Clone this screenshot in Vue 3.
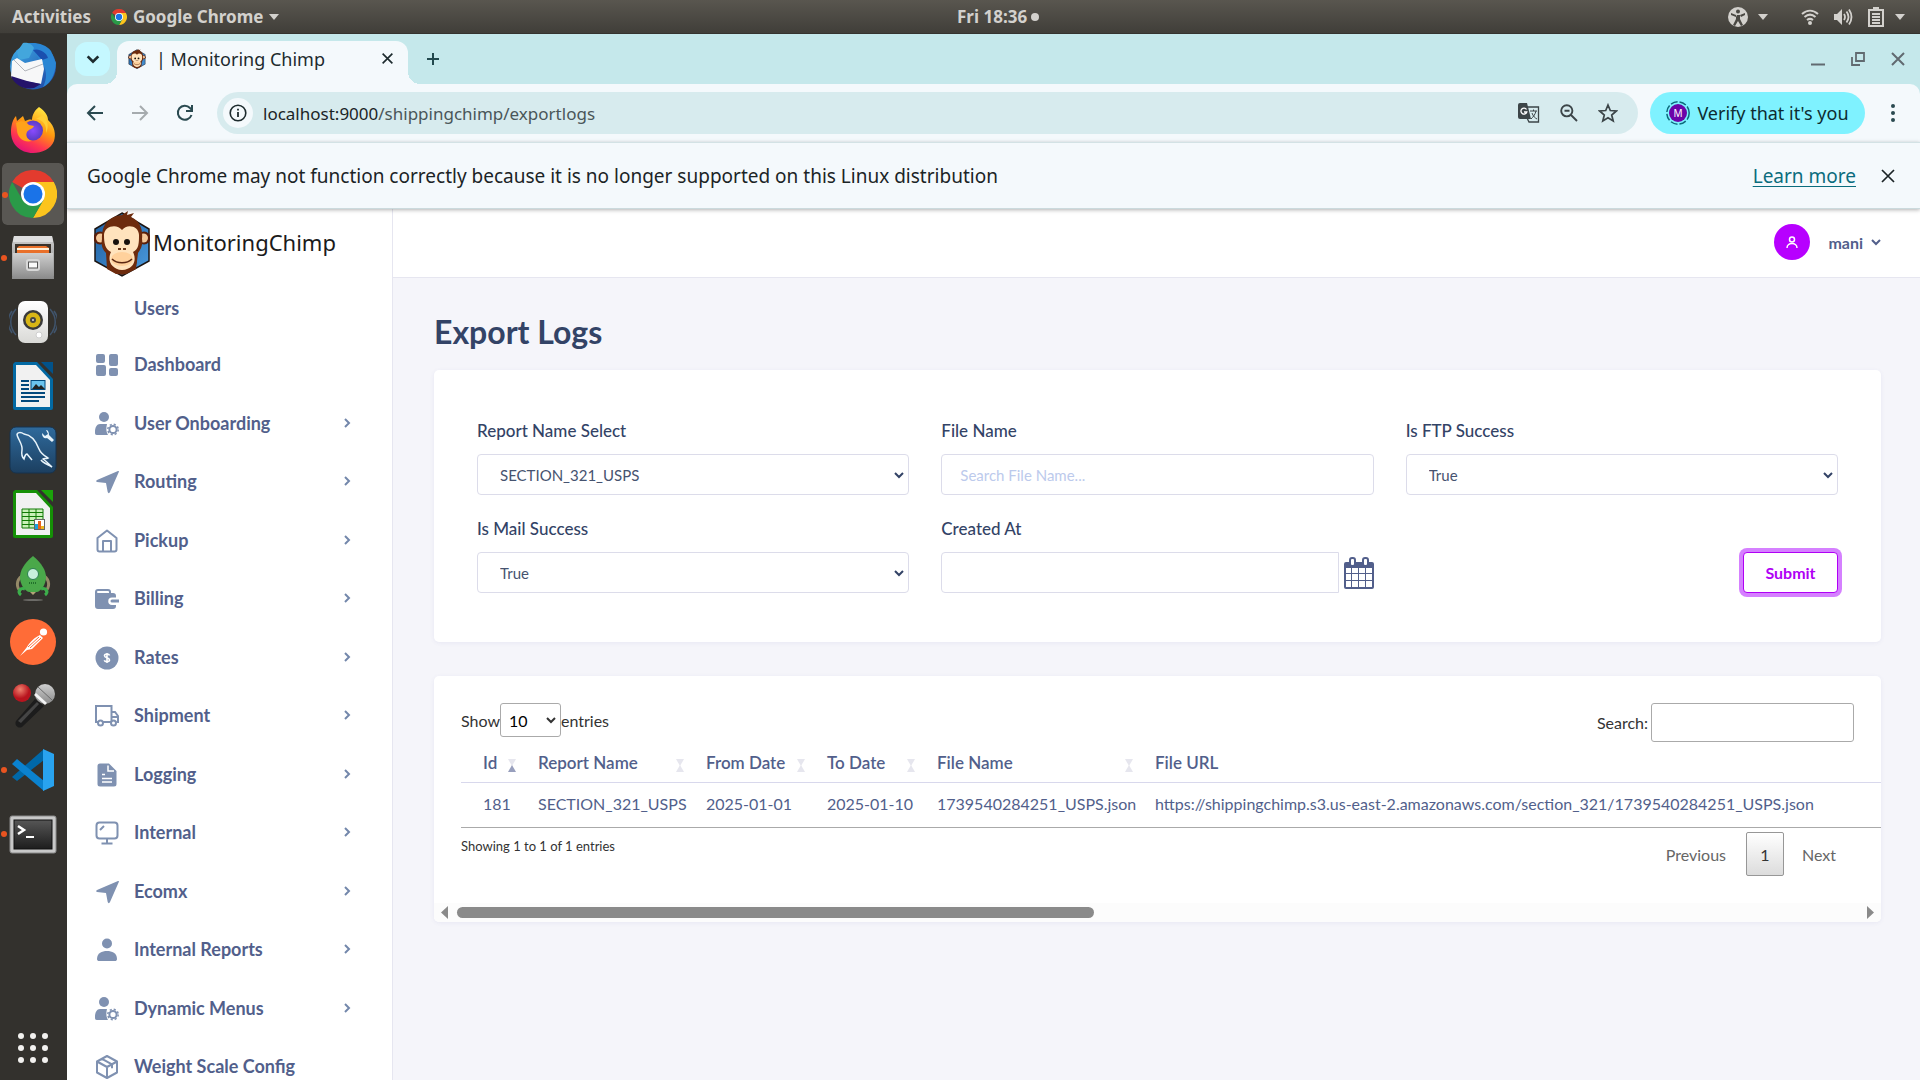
<script setup>
import { ref } from 'vue'

const dock = [
  { id: 'mail', label: 'Thunderbird' },
  { id: 'firefox', label: 'Firefox' },
  { id: 'chrome', label: 'Chrome', running: true, active: true },
  { id: 'files', label: 'Files', running: true },
  { id: 'speaker', label: 'Rhythmbox' },
  { id: 'writer', label: 'Writer' },
  { id: 'dolphin', label: 'Workbench' },
  { id: 'calc', label: 'Calc' },
  { id: 'rocket', label: 'Robo 3T' },
  { id: 'postman', label: 'Postman' },
  { id: 'mic', label: 'Recorder' },
  { id: 'vscode', label: 'Code', running: true },
  { id: 'terminal', label: 'Terminal', running: true }
]

const menu = [
  { text: 'Dashboard', icon: 'grid' },
  { text: 'User Onboarding', icon: 'usergear', more: true },
  { text: 'Routing', icon: 'plane', more: true },
  { text: 'Pickup', icon: 'home', more: true },
  { text: 'Billing', icon: 'wallet', more: true },
  { text: 'Rates', icon: 'dollar', more: true },
  { text: 'Shipment', icon: 'truck', more: true },
  { text: 'Logging', icon: 'doc', more: true },
  { text: 'Internal', icon: 'monitor', more: true },
  { text: 'Ecomx', icon: 'plane', more: true },
  { text: 'Internal Reports', icon: 'person', more: true },
  { text: 'Dynamic Menus', icon: 'usergear', more: true },
  { text: 'Weight Scale Config', icon: 'box' }
]

const columns = ['Id', 'Report Name', 'From Date', 'To Date', 'File Name', 'File URL']
const rows = [
  ['181', 'SECTION_321_USPS', '2025-01-01', '2025-01-10', '1739540284251_USPS.json',
    'https://shippingchimp.s3.us-east-2.amazonaws.com/section_321/1739540284251_USPS.json']
]

const report = ref('SECTION_321_USPS')
const fileName = ref('')
const ftp = ref('True')
const mail = ref('True')
const createdAt = ref('')
const pageSize = ref('10')
const search = ref('')
</script>

<template>
  <div class="desktop">
    <svg class="sprite" width="0" height="0" aria-hidden="true">
      <defs>
        <linearGradient id="gBlue" x1="0" y1="0" x2="1" y2="1"><stop offset="0" stop-color="#3fb0ea" /><stop offset="1" stop-color="#1c3fa0" /></linearGradient>
        <linearGradient id="gFox" x1="0.8" y1="0" x2="0.3" y2="1"><stop offset="0" stop-color="#fff24a" /><stop offset="0.45" stop-color="#ff980e" /><stop offset="0.75" stop-color="#ff3750" /><stop offset="1" stop-color="#e3107a" /></linearGradient>
        <linearGradient id="gGray" x1="0" y1="0" x2="0" y2="1"><stop offset="0" stop-color="#cfcfcf" /><stop offset="1" stop-color="#8a8a8a" /></linearGradient>
        <linearGradient id="gWhite" x1="0" y1="0" x2="0" y2="1"><stop offset="0" stop-color="#ffffff" /><stop offset="1" stop-color="#d9d9d6" /></linearGradient>
        <linearGradient id="gNavy" x1="0" y1="0" x2="0" y2="1"><stop offset="0" stop-color="#2f6a9c" /><stop offset="1" stop-color="#1c3f60" /></linearGradient>
        <linearGradient id="gTerm" x1="0" y1="0" x2="0" y2="1"><stop offset="0" stop-color="#565656" /><stop offset="1" stop-color="#1d1d1d" /></linearGradient>
        <linearGradient id="gHex" x1="0" y1="0" x2="1" y2="1"><stop offset="0" stop-color="#1d5d9f" /><stop offset="1" stop-color="#4b9add" /></linearGradient>
        <radialGradient id="gPurple"><stop offset="0" stop-color="#8a4bff" /><stop offset="1" stop-color="#5a3cc4" /></radialGradient>
        <radialGradient id="gRed" cx="0.4" cy="0.3"><stop offset="0" stop-color="#f0826e" /><stop offset="1" stop-color="#b8141e" /></radialGradient>
      </defs>

      <symbol id="mail" viewBox="0 0 48 48">
        <circle cx="24" cy="24.500" r="23" fill="url(#gBlue)" />
        <path d="M14 3C22-1 36 1 42 9l5 12c-1 12-5 20-13 24 4-8 4-16 0-22L24 8z" fill="#2a86d4" />
        <path d="M24 8c6-2 13 2 15 8l-6 2z" fill="#1b4fae" />
        <path d="M8 10l6-9c3-1 9 0 11 5l-5 10-10 2z" fill="#43a6dc" />
        <path d="M3 19l5-3 8 5 17-4 2 10-3 15-17-3L2 35z" fill="#f7f7f8" />
        <path d="M5 18l11 11 18-7" fill="none" stroke="#b3b5bb" stroke-width="1" />
        <path d="M2 34l16 5 14 3-7 4C16 48 6 44 2 34z" fill="#25136b" />
      </symbol>
      <symbol id="firefox" viewBox="0 0 48 48">
        <path d="M30 1c7 5 9 9 9 13 7 6 8 15 6 21C42 43 33 47 24 47 11 47 2 38 2 26c0-7 2-13 5-16l1 5 6-5 2 5c3-1 5-2 7-1 0-5 3-10 7-13z" fill="url(#gFox)" />
        <circle cx="24" cy="24.500" r="10" fill="url(#gPurple)" />
        <path d="M7 17c5-3 10-2 13 2l5 1c-1 3-5 3-7 6-2 4 1 8 5 9-9 2-15-4-15-11z" fill="#ffa21a" />
        <path d="M27 13c8 1 11 7 10 14 3-6 2-13-3-18z" fill="#ffcf36" />
      </symbol>
      <symbol id="chrome" viewBox="0 0 48 48">
        <path d="M24 24L3.200 12A24 24 0 0 1 44.800 12H24z" fill="#e33b2e" />
        <path d="M24 12h20.800A24 24 0 0 1 24 48l10.400-18z" fill="#fcc41d" />
        <path d="M3.200 12A24 24 0 0 0 24 48l10.400-18L24 34 13.600 30z" fill="#2a9a48" />
        <circle cx="24" cy="24" r="12" fill="#fff" />
        <circle cx="24" cy="24" r="9.500" fill="#1a73e8" />
      </symbol>
      <symbol id="files" viewBox="0 0 48 48">
        <path d="M5 2h38l2 8v32H3V10z" fill="url(#gGray)" />
        <path d="M5 2h38l1 6H4z" fill="#dedede" />
        <rect x="6" y="10" width="36" height="12" fill="#3a332c" />
        <path d="M8 14l2-2h27l3 2v8H8z" fill="#e9702a" />
        <rect x="8" y="14" width="32" height="2" fill="#fff0d8" />
        <path d="M4 19h40l1 26H3z" fill="url(#gGray)" />
        <rect x="17" y="25" width="14" height="12" rx="3" fill="#d8d8d8" />
        <rect x="19.500" y="28" width="9" height="6" fill="#fafafa" stroke="#555" />
      </symbol>
      <symbol id="speaker" viewBox="0 0 48 48">
        <path d="M7 11c-7 8-7 18 0 26M3 13c-5 7-5 15 0 22M41 11c7 8 7 18 0 26M45 13c5 7 5 15 0 22" fill="none" stroke="#40546c" stroke-width="1.500" />
        <rect x="9" y="3" width="30" height="42" rx="7" fill="url(#gWhite)" />
        <circle cx="24" cy="22" r="10" fill="#3a3a3a" />
        <circle cx="24" cy="22" r="7.500" fill="#d8b616" />
        <circle cx="24" cy="22" r="3" fill="#454545" />
        <circle cx="24" cy="22" r="1" fill="#ddd" />
        <circle cx="30" cy="37" r="3" fill="#fff" stroke="#cfcfcf" />
      </symbol>
      <symbol id="writer" viewBox="0 0 48 48">
        <path d="M6 0h22l16 17v29a2 2 0 0 1-2 2H6a2 2 0 0 1-2-2V2z" fill="#0369a3" />
        <path d="M32 0h12v12z" fill="#02528a" />
        <path d="M7 3h20l14 15v27H7z" fill="#f1f1f1" />
        <path d="M12 19h8M12 23h8M12 27h8M12 31h24M12 35h24M12 39h18" stroke="#03497c" stroke-width="2" />
        <rect x="22" y="18.500" width="14" height="9" fill="#6bc3ee" stroke="#03497c" />
        <path d="M23 27l4-5 3 3 2-2 4 4z" fill="#222" />
      </symbol>
      <symbol id="calc" viewBox="0 0 48 48">
        <path d="M6 0h22l16 17v29a2 2 0 0 1-2 2H6a2 2 0 0 1-2-2V2z" fill="#159006" />
        <path d="M32 0h12v12z" fill="#1ba30a" />
        <path d="M7 3h20l14 15v27H7z" fill="#f1f1f1" />
        <path d="M13 19h21v19H13z" fill="#c9f0b8" stroke="#107a04" />
        <path d="M13 22.500h21M13 26.500h21M13 30.500h21M13 34.500h21M20 19v19M27 19v19" stroke="#107a04" />
        <rect x="25.500" y="29.500" width="10" height="10" fill="#fff" stroke="#666" />
        <path d="M26 34h3v5h-3z" fill="#19a1de" /><path d="M29 31h3v8h-3z" fill="#e7641c" /><path d="M32 36h3v3h-3z" fill="#ecb71f" />
      </symbol>
      <symbol id="dolphin" viewBox="0 0 48 48">
        <rect x="1" y="1" width="46" height="46" rx="6" fill="url(#gNavy)" stroke="#17334e" />
        <path d="M8 9c0-3 4-3 7-1 8 1 12 7 15 15 2 5 6 7 9 9-2 1-4 0-5 1 3 2 6 5 9 8-5-3-9-4-11-7M8 9c2 6 6 10 5 15-1 6 1 8 2 9 1-3 1-5 3-5l5 6" fill="none" stroke="#e8f4fb" stroke-width="1.500" />
        <path d="M37 4l2 4-3 2-3-3c0 4 2 6 5 5l5 4 2-2-5-5c0-3-1-5-3-5z" fill="#e8f4fb" />
      </symbol>
      <symbol id="rocket" viewBox="0 0 48 48">
        <path d="M13 22c-6 4-6 12-1 15M35 22c6 4 6 12 1 15" fill="none" stroke="#958a68" stroke-width="3" />
        <path d="M24 2c9 7 13 15 13 21 0 8-5 14-9 15h-8c-4-1-9-7-9-15C11 17 15 9 24 2z" fill="#4aa84a" />
        <circle cx="24" cy="20" r="5.500" fill="#c8f0dc" stroke="#2c8051" stroke-width="1" />
        <path d="M20 29h8" stroke="#21702b" stroke-width="2" stroke-dasharray="1 1" />
        <path d="M16 35c-5-2-8 3-4 6M32 35c5-2 8 3 4 6" fill="none" stroke="#3cae4b" stroke-width="3" />
        <path d="M21 38h6l-3 3z" fill="#b3a678" />
        <ellipse cx="24" cy="46" rx="10" ry="1" fill="#6d6c68" />
      </symbol>
      <symbol id="postman" viewBox="0 0 48 48">
        <circle cx="24" cy="24" r="23" fill="#ff6c37" />
        <circle cx="34.500" cy="14" r="3.600" fill="#fff" />
        <path d="M31 17l3 3-11 11-5 1-7 6 7-9c2-4 8-10 13-12z" fill="#fff" />
        <path d="M19 29l11-10M21 30l11-10" stroke="#ff6c37" stroke-width="1" />
      </symbol>
      <symbol id="mic" viewBox="0 0 48 48">
        <path d="M26 17l9 7-22 21c-4 2-8-2-6-6z" fill="#1c1c1c" />
        <path d="M28 20l2 2-18 19-3-2z" fill="#454545" />
        <circle cx="36" cy="12" r="10" fill="url(#gGray)" />
        <path d="M26 12l11 10" stroke="#f3f3f3" stroke-width="3" />
        <path d="M29 5l14 13" stroke="#6b6b6b" stroke-width="1" />
        <circle cx="13" cy="11" r="9" fill="url(#gRed)" />
      </symbol>
      <symbol id="vscode" viewBox="0 0 48 48">
        <path d="M3 31l5 4 27-21V3z" fill="#0068a8" />
        <path d="M8 13l27 22v10L3 18z" fill="#0b82cf" />
        <path d="M34 3l11 5v32l-11 5z" fill="#29a3ef" />
      </symbol>
      <symbol id="terminal" viewBox="0 0 48 48">
        <rect x="1" y="6" width="46" height="37" rx="2" fill="#c8c8c8" stroke="#8b8b8b" />
        <rect x="5" y="10" width="38" height="29" fill="url(#gTerm)" stroke="#111" />
        <path d="M9 16l6 4-6 4" fill="none" stroke="#fff" stroke-width="2.500" />
        <path d="M17 27h8" stroke="#fff" stroke-width="2" />
      </symbol>
      <symbol id="monkey" viewBox="0 0 56 66">
        <path d="M28 2l27 16v32L28 65 1 50V18z" fill="url(#gHex)" stroke="#1c1512" stroke-width="1.500" />
        <path d="M13 50c1 7 8 12 15 14 7-2 14-7 15-14z" fill="#5f260d" />
        <circle cx="6" cy="27" r="6.500" fill="#5a1f0b" /><circle cx="50" cy="27" r="6.500" fill="#5a1f0b" />
        <circle cx="6.500" cy="27" r="4.500" fill="#f5c99a" /><circle cx="49.500" cy="27" r="4.500" fill="#f5c99a" />
        <path d="M28 4l6-4-1 4 7-2-3 4c9 4 12 12 11 22 1 6-1 10-4 14l-2 16-10 5H22l-9-5-1-16c-4-4-5-8-4-14C7 14 15 5 28 4z" fill="#6d2b0d" />
        <path d="M28 19c5-7 17-4 17 5 0 8 0 14-6 17 4 8 1 17-11 18-11-1-15-10-11-18-6-3-7-9-7-17 0-9 13-12 18-5z" fill="#ffe3bd" />
        <ellipse cx="28" cy="48" rx="11" ry="7" fill="#ffd19c" />
        <circle cx="22" cy="31" r="3" fill="#17110d" /><circle cx="33" cy="31" r="3" fill="#17110d" />
        <path d="M24 38h3M29 38h3" stroke="#6d3a1c" stroke-width="2" />
        <path d="M18 48c5 5 15 5 20 0" fill="none" stroke="#5a2711" stroke-width="1.500" />
      </symbol>

      <symbol id="grid" viewBox="0 0 24 24"><path d="M3 1h5a2 2 0 0 1 2 2v5a2 2 0 0 1-2 2H3a2 2 0 0 1-2-2V3a2 2 0 0 1 2-2zm13 0h5a2 2 0 0 1 2 2v8a2 2 0 0 1-2 2h-5a2 2 0 0 1-2-2V3a2 2 0 0 1 2-2zM3 12h6a2 2 0 0 1 2 2v7a2 2 0 0 1-2 2H3a2 2 0 0 1-2-2v-7a2 2 0 0 1 2-2zm13 3h5a2 2 0 0 1 2 2v4a2 2 0 0 1-2 2h-5a2 2 0 0 1-2-2v-4a2 2 0 0 1 2-2z" fill="currentColor" /></symbol>
      <symbol id="usergear" viewBox="0 0 24 24"><circle cx="9" cy="5" r="5" fill="currentColor" /><path d="M5 12h7c-1 4-1 8 1 11H2c-2 0-2-1-2-3 0-5 2-8 5-8z" fill="currentColor" /><circle cx="18" cy="17.500" r="3.600" fill="none" stroke="currentColor" stroke-width="2" /><circle cx="18" cy="17.500" r="5.200" fill="none" stroke="currentColor" stroke-width="1.500" stroke-dasharray="2.100 2" /></symbol>
      <symbol id="plane" viewBox="0 0 24 24"><path d="M23 1c1-.3 1 .3.800 1L15 22c-.5 1.500-2 1.500-2.300 0L11 13 2 12c-1-.3-1-1.500 0-2z" fill="currentColor" /></symbol>
      <symbol id="home" viewBox="0 0 24 24"><path d="M2.500 9L12 1.500 21.500 9v11.500a2 2 0 0 1-2 2h-15a2 2 0 0 1-2-2zM8 22V12h8v10" fill="none" stroke="currentColor" stroke-width="2" stroke-linejoin="round" /></symbol>
      <symbol id="wallet" viewBox="0 0 24 24"><path d="M3 2h10a3 3 0 0 1 3 3v1h2a3 3 0 0 1 3 3v1.500h-4a3.700 3.700 0 0 0 0 7.500h4v1a3 3 0 0 1-3 3H3a3 3 0 0 1-3-3V5a3 3 0 0 1 3-3zm0 2a1 1 0 0 0 0 2h11V5a1 1 0 0 0-1-1z" fill="currentColor" fill-rule="evenodd" /><path d="M17 12.500h7v3h-7a1.500 1.500 0 0 1 0-3z" fill="currentColor" /></symbol>
      <symbol id="dollar" viewBox="0 0 24 24"><circle cx="12" cy="12" r="11.500" fill="currentColor" /><path d="M14.500 9.500c-.5-2-5-2-5 .3 0 2.400 5 1.700 5 4.300 0 2.200-4.700 2.200-5.200.2M12 7v10" fill="none" stroke="#fff" stroke-width="1.600" /></symbol>
      <symbol id="truck" viewBox="0 0 24 24"><path d="M3 18H1V2h15.500v16H8M16.500 8H20l3 4v6h-1.500M16.500 13H23" fill="none" stroke="currentColor" stroke-width="2" /><circle cx="5.500" cy="19" r="2.500" fill="#fff" stroke="currentColor" stroke-width="2" /><circle cx="18.500" cy="19" r="2.500" fill="#fff" stroke="currentColor" stroke-width="2" /></symbol>
      <symbol id="doc" viewBox="0 0 24 24"><path d="M5 .5h9L21.500 8v13a2.500 2.500 0 0 1-2.500 2.500H5A2.500 2.500 0 0 1 2.500 21V3A2.500 2.500 0 0 1 5 .5z" fill="currentColor" /><path d="M13 2.500V8h6M7 11.500h3M7 15.500h10M7 19h10" fill="none" stroke="#fff" stroke-width="1.500" /></symbol>
      <symbol id="monitor" viewBox="0 0 24 24"><rect x="1.500" y="1.500" width="21" height="16" rx="3" fill="none" stroke="currentColor" stroke-width="2" /><path d="M12 18v4M6.500 22.500h11M5 9l4-4" stroke="currentColor" stroke-width="2" /></symbol>
      <symbol id="person" viewBox="0 0 24 24"><circle cx="12" cy="5.500" r="5" fill="currentColor" /><path d="M2 21c0-6 5-8 10-8s10 2 10 8c0 1.500-1 2-2 2H4c-1 0-2-.5-2-2z" fill="currentColor" /></symbol>
      <symbol id="box" viewBox="0 0 24 24"><path d="M12 1l10 5.500v11L12 23 2 17.500v-11zM2 6.500L12 12l10-5.500M12 12v11M7 3.800l10 5.500v4" fill="none" stroke="currentColor" stroke-width="2" stroke-linejoin="round" /></symbol>
      <symbol id="cross" viewBox="0 0 16 16"><path d="M2 2l12 12M14 2L2 14" stroke="currentColor" stroke-width="2" /></symbol>
      <symbol id="down" viewBox="0 0 12 12"><path d="M2 4l4 4 4-4" fill="none" stroke="currentColor" stroke-width="2" /></symbol>
      <symbol id="caret" viewBox="0 0 10 6"><path d="M0 0h10L5 6z" fill="currentColor" /></symbol>
    </svg>

    <header class="topbar">
      <div class="tb-left">
        <span>Activities</span>
        <span class="tb-app"><svg width="16" height="16"><use href="#chrome" /></svg>Google Chrome<svg width="10" height="6"><use href="#caret" /></svg></span>
      </div>
      <div class="clock">Fri 18:36<i class="dot"></i></div>
      <div class="tray">
        <svg width="20" height="20" viewBox="0 0 20 20"><circle cx="10" cy="10" r="10" fill="currentColor" /><circle cx="10" cy="4.500" r="2" fill="#4a4843" /><path d="M3 6l5 2v4l-3 6 2 1 3-5 3 5 2-1-3-6V8l5-2v2l-4 2-1-2H9L8 10 3 8z" fill="#4a4843" /></svg>
        <svg class="c1" width="10" height="6"><use href="#caret" /></svg>
        <svg width="18" height="18" viewBox="0 0 18 18"><path d="M1 6c5-4.500 11-4.500 16 0M3.500 9c3.500-3 7.500-3 11 0M6 12c2-1.500 4-1.500 6 0" fill="none" stroke="currentColor" stroke-width="2" /><circle cx="9" cy="15" r="2" fill="currentColor" /></svg>
        <svg width="19" height="18" viewBox="0 0 19 18"><path d="M0 6h3l5-5v16l-5-5H0z" fill="currentColor" /><path d="M10 6q2 3 0 6M12.500 3.500q4 5.500 0 11M15 1.500q5 7.500 0 15" fill="none" stroke="currentColor" stroke-width="1.800" /></svg>
        <svg width="16" height="20" viewBox="0 0 16 20"><path d="M5 0h6v2h5v18H0V2h5zM2 4v14h12V4z" fill="currentColor" fill-rule="evenodd" /><path d="M4 7h8M4 10h8M4 13h8M4 16h8" stroke="currentColor" stroke-width="2" /></svg>
        <svg class="c2" width="10" height="6"><use href="#caret" /></svg>
      </div>
    </header>

    <div class="work">
      <nav class="dock" aria-label="Dock">
        <button v-for="d in dock" :key="d.id" class="app" :class="{ active: d.active }" :aria-label="d.label">
          <i v-if="d.running" class="run"></i>
          <svg width="48" height="48"><use :href="'#' + d.id" /></svg>
        </button>
        <button class="apps" aria-label="Show applications"><i v-for="n in 9" :key="n"></i></button>
      </nav>

      <div class="browser">
        <div class="tabs">
          <button class="tabsearch" aria-label="Search tabs"><svg width="16" height="16"><use href="#down" /></svg></button>
          <div class="tab">
            <svg width="20" height="20"><use href="#monkey" /></svg>
            <span class="title">| Monitoring Chimp</span>
            <button aria-label="Close tab"><svg width="13" height="13"><use href="#cross" /></svg></button>
          </div>
          <button class="newtab" aria-label="New tab"><svg width="14" height="14" viewBox="0 0 14 14"><path d="M7 1v12M1 7h12" stroke="currentColor" stroke-width="2" /></svg></button>
          <div class="wincontrols">
            <button aria-label="Minimize"><svg width="16" height="16" viewBox="0 0 16 16"><path d="M1 13.500h14" stroke="currentColor" stroke-width="2" /></svg></button>
            <button aria-label="Restore"><svg width="16" height="16" viewBox="0 0 16 16"><path d="M6 2h8v8H6zM2 6v8h8" fill="none" stroke="currentColor" stroke-width="1.800" /></svg></button>
            <button aria-label="Close"><svg width="16" height="16"><use href="#cross" /></svg></button>
          </div>
        </div>

        <div class="toolbar">
          <button aria-label="Back"><svg width="18" height="18" viewBox="0 0 18 18"><path d="M17 9H3M9 2L2 9l7 7" fill="none" stroke="currentColor" stroke-width="2" /></svg></button>
          <button class="off" aria-label="Forward"><svg width="18" height="18" viewBox="0 0 18 18"><path d="M1 9h14M9 2l7 7-7 7" fill="none" stroke="currentColor" stroke-width="2" /></svg></button>
          <button aria-label="Reload"><svg width="18" height="18" viewBox="0 0 18 18"><path d="M15.500 11A7 7 0 1 1 14 4l2 2M16 1v6h-6" fill="none" stroke="currentColor" stroke-width="2" /></svg></button>
          <div class="omnibox">
            <button class="info" aria-label="Site information"><svg width="18" height="18" viewBox="0 0 18 18"><circle cx="9" cy="9" r="7.800" fill="none" stroke="currentColor" stroke-width="1.600" /><path d="M9 8v5M9 4.800v1.800" stroke="currentColor" stroke-width="1.800" /></svg></button>
            <span class="url">localhost:9000<em>/shippingchimp/exportlogs</em></span>
            <button aria-label="Translate"><svg width="22" height="20" viewBox="0 0 22 20"><path d="M8 4h12.500v15H11L9 15" fill="none" stroke="currentColor" stroke-width="1.300" /><path d="M2 0h7l4 16H2a2 2 0 0 1-2-2V2a2 2 0 0 1 2-2z" fill="currentColor" /><path d="M8.500 6.500a3 3 0 1 0 .3 2.500H6" fill="none" stroke="#fff" stroke-width="1.300" /><path d="M12 8h7M15.500 6.500V8M18 8c-1 4-3 6-5 8M14 10c1 3 3 5 5 6" fill="none" stroke="currentColor" /></svg></button>
            <button aria-label="Zoom"><svg width="18" height="18" viewBox="0 0 18 18"><circle cx="6.800" cy="6.800" r="5.600" fill="none" stroke="currentColor" stroke-width="1.900" /><path d="M11 11l6 6M4.500 6.800h5" stroke="currentColor" stroke-width="1.900" /></svg></button>
            <button aria-label="Bookmark"><svg width="20" height="20" viewBox="0 0 20 20"><path d="M10 2l2.300 5.500 6 .5-4.600 4 1.500 6-5.200-3.200L4.800 18l1.500-6-4.600-4 6-.5z" fill="none" stroke="currentColor" stroke-width="1.700" /></svg></button>
          </div>
          <button class="verify"><svg width="24" height="24" viewBox="0 0 24 24"><circle cx="12" cy="12" r="11.200" fill="none" stroke="#0d6b7c" stroke-width="1.500" stroke-dasharray="7 2" /><circle cx="12" cy="12" r="9" fill="#6c04a8" /><text x="12" y="15.500" text-anchor="middle" font-size="10" fill="#fff">M</text></svg>Verify that it's you</button>
          <button class="kebab" aria-label="Menu"><svg width="4" height="18" viewBox="0 0 4 18"><circle cx="2" cy="2" r="2" /><circle cx="2" cy="9" r="2" /><circle cx="2" cy="16" r="2" /></svg></button>
        </div>

        <div class="infobar">
          <span>Google Chrome may not function correctly because it is no longer supported on this Linux distribution</span>
          <a href="#">Learn more</a>
          <button aria-label="Dismiss"><svg width="14" height="14" viewBox="0 0 14 14"><path d="M1 1l12 12M13 1L1 13" stroke="currentColor" stroke-width="1.700" /></svg></button>
        </div>

        <div class="page">
          <aside class="sidebar">
            <a class="brand" href="#"><svg width="56" height="66"><use href="#monkey" /></svg><span>MonitoringChimp</span></a>
            <a class="plain" href="#">Users</a>
            <ul>
              <li v-for="m in menu" :key="m.text">
                <a href="#">
                  <svg class="ico" width="24" height="24"><use :href="'#' + m.icon" /></svg>
                  <span>{{ m.text }}</span>
                  <svg v-if="m.more" class="chev" width="8" height="12" viewBox="0 0 8 12"><path d="M2 2l4 4-4 4" fill="none" stroke="currentColor" stroke-width="2" /></svg>
                </a>
              </li>
            </ul>
          </aside>

          <div class="main">
            <header class="pagehead">
              <span class="avatar"><svg width="12" height="13" viewBox="0 0 12 13"><circle cx="6" cy="3.500" r="2.500" fill="none" stroke="#fff" stroke-width="1.500" /><path d="M1 12c0-6 10-6 10 0" fill="none" stroke="#fff" stroke-width="1.500" /></svg></span>
              <button>mani<svg width="12" height="12"><use href="#down" /></svg></button>
            </header>

            <main>
              <h1>Export Logs</h1>

              <form class="card filters" @submit.prevent>
                <div class="field">
                  <label for="report">Report Name Select</label>
                  <div class="sel"><select id="report" v-model="report"><option>SECTION_321_USPS</option></select><svg width="12" height="12"><use href="#down" /></svg></div>
                </div>
                <div class="field">
                  <label for="file">File Name</label>
                  <input id="file" v-model="fileName" type="text" placeholder="Search File Name..." />
                </div>
                <div class="field">
                  <label for="ftp">Is FTP Success</label>
                  <div class="sel"><select id="ftp" v-model="ftp"><option>True</option><option>False</option></select><svg width="12" height="12"><use href="#down" /></svg></div>
                </div>
                <div class="field">
                  <label for="mailok">Is Mail Success</label>
                  <div class="sel"><select id="mailok" v-model="mail"><option>True</option><option>False</option></select><svg width="12" height="12"><use href="#down" /></svg></div>
                </div>
                <div class="field">
                  <label for="created">Created At</label>
                  <div class="date">
                    <input id="created" v-model="createdAt" type="text" />
                    <svg width="30" height="32" viewBox="0 0 30 32"><path d="M2 5h26a2 2 0 0 1 2 2v23a2 2 0 0 1-2 2H2a2 2 0 0 1-2-2V7a2 2 0 0 1 2-2z" fill="#525f8b" /><path d="M2 11h5v5H2zm6 0h6v5H8zm7 0h6v5h-6zm7 0h6v5h-6zM2 17h5v6H2zm6 0h6v6H8zm7 0h6v6h-6zm7 0h6v6h-6zM2 24h5v6H2zm6 0h6v6H8zm7 0h6v6h-6zm7 0h6v6h-6z" fill="#fff" /><rect x="6" y="1" width="5" height="8" rx="2" fill="#fff" stroke="#525f8b" stroke-width="2" /><rect x="19" y="1" width="5" height="8" rx="2" fill="#fff" stroke="#525f8b" stroke-width="2" /></svg>
                  </div>
                </div>
                <div class="actions"><button type="submit">Submit</button></div>
              </form>

              <section class="card results">
                <div class="controls">
                  <label class="len">Show<span class="sel small"><select v-model="pageSize"><option>10</option><option>25</option></select><svg width="12" height="12"><use href="#down" /></svg></span>entries</label>
                  <label class="find">Search:<input v-model="search" type="search" /></label>
                </div>
                <div class="tablewrap">
                  <table>
                    <colgroup><col v-for="(c, i) in columns" :key="c" :class="'col' + i" /></colgroup>
                    <thead>
                      <tr>
                        <th v-for="(c, i) in columns" :key="c" scope="col">
                          <div class="th">{{ c }}<svg v-if="i < 5" width="8" height="13" viewBox="0 0 8 13"><path d="M0 0h8L4 7z" fill="#e6e6ee" /><path d="M0 13h8L4 6z" :fill="i === 0 ? '#989fbd' : '#e6e6ee'" /></svg></div>
                        </th>
                      </tr>
                    </thead>
                    <tbody>
                      <tr v-for="r in rows" :key="r[0]"><td v-for="c in r" :key="c">{{ c }}</td></tr>
                    </tbody>
                  </table>
                </div>
                <div class="foot">
                  <span>Showing 1 to 1 of 1 entries</span>
                  <div class="pager"><button class="muted">Previous</button><button class="current">1</button><button class="muted">Next</button></div>
                </div>
                <div class="scroll">
                  <svg width="7" height="13" viewBox="0 0 7 13"><path d="M7 0v13L0 6.500z" fill="#8a8a8a" /></svg>
                  <div class="track"><div class="thumb"></div></div>
                  <svg width="7" height="13" viewBox="0 0 7 13"><path d="M0 0v13l7-6.500z" fill="#8a8a8a" /></svg>
                </div>
              </section>
            </main>
          </div>
        </div>
      </div>
    </div>
  </div>
</template>

<style>
body { margin: 0; overflow: hidden; }
</style>

<style scoped>
* { box-sizing: border-box; }
button { border: 0; background: none; padding: 0; margin: 0; font: inherit; color: inherit; display: flex; align-items: center; justify-content: center; }
a { color: inherit; text-decoration: none; }
svg { flex: none; display: block; }
.sprite { position: absolute; }
.desktop { height: 100vh; display: flex; flex-direction: column; overflow: hidden; font-family: "Noto Sans", sans-serif; }

.topbar { flex: none; height: 34px; display: grid; grid-template-columns: 50% auto 1fr; align-items: center; background: linear-gradient(#59564f, #403e39); border-bottom: 1px solid #35332f; color: #d3d1cd; font-size: 17px; font-weight: 700; }
.tb-left { display: flex; gap: 20px; padding-left: 12px; }
.tb-app { display: flex; align-items: center; gap: 6px; }
.clock { display: flex; align-items: center; gap: 4px; margin-left: -3px; }
.dot { width: 8px; height: 8px; border-radius: 50%; background: currentColor; }
.tray { display: flex; align-items: center; justify-content: flex-end; gap: 15px; padding-right: 15px; }
.tray .c1 { margin-right: 18px; margin-left: -5px; }
.tray .c2 { margin-left: -4px; }

.work { flex: 1; min-height: 0; display: flex; }
.dock { flex: none; width: 67px; background: #33312d; display: flex; flex-direction: column; align-items: flex-end; padding-right: 2px; }
.app { position: relative; width: 64px; height: 64px; flex: none; }
.app.active { background: #595753; background-clip: padding-box; border: 1px solid #33312d; border-radius: 6px; }
.run { position: absolute; left: 0; top: 29px; width: 6px; height: 6px; border-radius: 50%; background: #e95420; }
.apps { display: grid; grid-template-columns: repeat(3, 6px); gap: 6px; width: 64px; margin-top: auto; margin-bottom: 17px; }
.apps i { width: 6px; height: 6px; border-radius: 50%; background: #f2f1ef; }

.browser { flex: 1; min-width: 0; display: flex; flex-direction: column; background: #c5e8eb; }
.tabs { flex: none; height: 50px; display: flex; align-items: center; padding-left: 8px; color: #1d2b2e; }
.tabsearch { width: 35px; height: 34px; border-radius: 12px; background: #c5f8ff; }
.tab { position: relative; align-self: flex-end; width: 291px; height: 43px; margin-left: 7px; border-radius: 12px 12px 0 0; background: #f4f9fc; display: flex; align-items: center; gap: 9px; padding: 0 14px 8px 10px; font-size: 18px; }
.tab::before, .tab::after { content: ""; position: absolute; bottom: 0; width: 12px; height: 12px; }
.tab::before { left: -12px; background: radial-gradient(circle at 0 0, transparent 12px, #f4f9fc 12px); }
.tab::after { right: -12px; background: radial-gradient(circle at 100% 0, transparent 12px, #f4f9fc 12px); }
.title { flex: 1; }
.newtab { margin-left: 18px; color: #23494e; }
.wincontrols { margin-left: auto; display: flex; gap: 24px; padding-right: 14px; color: #616a70; }

.toolbar { flex: none; height: 58px; display: flex; align-items: center; gap: 27px; padding-left: 19px; padding-right: 25px; background: #f4f9fc; border-radius: 10px 10px 0 0; color: #2a4a50; }
.off { color: #a5abae; }
.omnibox { flex: 1; height: 42px; margin-left: -4px; margin-right: -15px; border-radius: 21px; background: #d7ebee; display: flex; align-items: center; gap: 20px; padding: 0 20px 0 6px; color: #3c4548; font-size: 17px; }
.info { width: 30px; height: 30px; margin-right: -10px; border-radius: 50%; background: #f4f9fc; color: #1d2b2e; }
.url { flex: 1; color: #1b2426; }
.url em { font-style: normal; color: #4a5659; }
.verify { height: 42px; width: 215px; gap: 7px; border-radius: 21px; background: #7ff2ff; color: #0d2c31; font-size: 18px; }
.kebab { margin-left: -1px; }
.kebab svg { fill: currentColor; }

.infobar { flex: none; position: relative; height: 67px; display: flex; align-items: center; padding: 0 25px 0 20px; background: #f4f9fc; border-top: 1px solid #d3e2e5; border-bottom: 1px solid #cbdadd; box-shadow: 0 1px 4px rgba(0, 0, 0, 0.3); color: #1b2426; font-size: 19px; }
.infobar a { margin-left: auto; margin-right: 25px; color: #0a6c7d; text-decoration: underline; text-underline-offset: 3px; }

.page { flex: 1; min-height: 0; display: flex; background: #f5f5fa; font-family: Lato, sans-serif; }
.sidebar { flex: none; width: 326px; overflow: hidden; background: #fff; border-right: 1px solid #e6e6f0; color: #525f8b; font-size: 18px; font-weight: 700; }
.brand { display: flex; align-items: center; gap: 3px; padding-left: 27px; height: 70px; font-family: "Noto Sans", sans-serif; font-size: 22px; font-weight: 400; color: #1b1b1b; }
.brand span { padding-bottom: 4px; }
.plain { display: block; height: 56px; line-height: 58px; padding-left: 67px; }
ul { margin: 0; padding: 0; list-style: none; }
li a { display: flex; align-items: center; height: 58px; padding: 0 41px 0 28px; }
li:nth-child(even) a { height: 59px; }
.ico { color: #7f91b1; margin-right: 15px; margin-top: 2px; }
li span { flex: 1; }
.chev { color: #7387ab; }

.main { flex: 1; min-width: 0; display: flex; flex-direction: column; }
.pagehead { flex: none; height: 69px; display: flex; align-items: center; justify-content: flex-end; gap: 18px; padding-right: 38px; padding-bottom: 2px; background: #fff; border-bottom: 1px solid #e6e6f0; color: #525f8b; font-size: 16px; font-weight: 700; }
.pagehead button { gap: 7px; }
.avatar { width: 36px; height: 36px; border-radius: 50%; background: #b700ff; display: flex; align-items: center; justify-content: center; }
main { padding: 34px 39px 0 41px; }
h1 { margin: 0 0 18px; line-height: 40px; font-size: 32px; font-weight: 700; color: #334366; }
.card { background: #fff; border-radius: 5px; box-shadow: 0 1px 4px rgba(80, 80, 160, 0.08); }

.filters { display: grid; grid-template-columns: repeat(3, 1fr); gap: 22px 32px; padding: 49px 43px; color: #334366; font-size: 16px; }
.field { display: flex; flex-direction: column; min-width: 0; }
.field > label { line-height: 24px; margin-bottom: 11px; font-size: 17px; font-weight: 500; }
.filters input, .filters select { width: 100%; height: 41px; border: 1px solid #dcdcea; border-radius: 4px; background: #fff; font: inherit; font-size: 15px; color: #46536f; padding: 0 18px; outline: 0; }
.filters select { padding-left: 22px; }
.filters input::placeholder { color: #bccaec; opacity: 1; }
.sel { position: relative; }
.sel select { appearance: none; }
.sel svg { position: absolute; right: 4px; top: 50%; margin-top: -6px; pointer-events: none; }
.date { display: flex; align-items: center; gap: 5px; }
.date input { flex: 1; border-radius: 4px 0 0 4px; }
.actions { display: flex; align-items: flex-end; justify-content: flex-end; }
.actions button { width: 95px; height: 41px; border: 1px solid #b000f5; border-radius: 4px; background: #fff; box-shadow: 0 0 0 4px #d580ff; color: #b000f5; font-size: 16px; font-weight: 700; }

.results { margin-top: 34px; padding-top: 27px; overflow: hidden; color: #333; font-size: 16px; }
.controls { display: flex; justify-content: space-between; align-items: flex-start; padding: 0 27px; height: 42px; }
.len, .find { display: flex; align-items: center; }
.find { gap: 3px; }
.small select { width: 61px; height: 34px; border: 1px solid #aaa; border-radius: 3px; background: #fff; font: inherit; color: #000; padding: 0 8px; }
.find input { width: 203px; height: 39px; border: 1px solid #aaa; border-radius: 3px; background: #fff; }
.tablewrap { overflow: hidden; padding-left: 27px; }
table { width: 100%; table-layout: fixed; border-collapse: separate; border-spacing: 0; color: #525f8b; border-bottom: 1px solid #aaa; }
.col0 { width: 55px; } .col1 { width: 168px; } .col2 { width: 121px; } .col3 { width: 110px; } .col4 { width: 218px; }
th, td { padding: 0 0 3px 22px; text-align: left; white-space: nowrap; }
th { height: 38px; font-size: 17px; font-weight: 600; border-bottom: 1px solid #d8d8ec; }
td { height: 44px; }
.th { display: flex; align-items: center; justify-content: space-between; }
.th svg { margin-top: 6px; }
.foot { display: flex; justify-content: space-between; height: 75px; padding: 4px 27px 0; font-size: 13px; }
.foot > span { line-height: 29px; }
.pager { display: flex; align-items: flex-start; font-size: 16px; }
.pager button { height: 44px; min-width: 38px; padding: 0 17px; border: 1px solid transparent; border-radius: 2px; color: #333; }
.pager .muted { color: #666; }
.pager .current { margin-left: 2px; padding: 0; border-color: #979797; background: linear-gradient(#fff, #dcdcdc); }
.scroll { display: flex; align-items: center; gap: 9px; height: 19px; padding: 0 7px; background: #fcfcfc; }
.track { flex: 1; }
.thumb { width: calc(100% * 5 / 11); height: 11px; border-radius: 6px; background: #8a8a8a; }
</style>
